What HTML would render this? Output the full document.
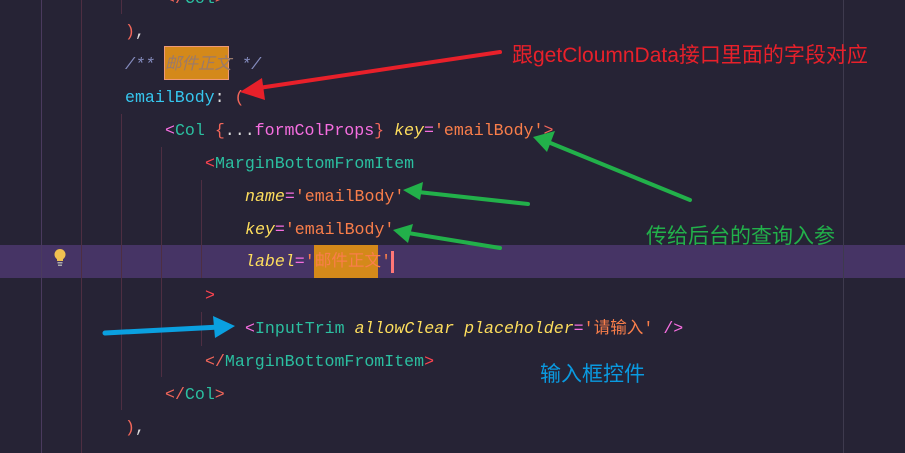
<!DOCTYPE html>
<html><head><meta charset="utf-8"><style>
body{margin:0;width:905px;height:453px;overflow:hidden;background:#262335;position:relative;font-family:"Liberation Mono","Noto Sans CJK SC",monospace;font-size:16.6px}
.l{position:absolute;left:0;height:33px;line-height:33px;white-space:pre}
.g{position:absolute;width:1px}
.p{color:#fe4450}.t{color:#2bbfa0}.a{color:#fede5d;font-style:italic}.s{color:#f97e4a}.c{color:#848bbd;font-style:italic}.v{color:#36c6ee}.w{color:#ddd}.m{color:#f66ee0}.o{color:#f2665a}
.ann{position:absolute;font-family:"Liberation Sans","Noto Sans CJK SC",sans-serif;font-size:21px;white-space:nowrap}
</style></head><body>
<div style="position:absolute;left:0;top:245px;width:905px;height:33px;background:#463465"></div>
<div class="g" style="left:41px;top:0;height:453px;background:#4a3a5e"></div>
<div class="g" style="left:81px;top:0;height:453px;background:#4e2e42"></div>
<div class="g" style="left:121px;top:0;height:14px;background:#4e2e42"></div>
<div class="g" style="left:121px;top:114px;height:296px;background:#4e2e42"></div>
<div class="g" style="left:161px;top:147px;height:230px;background:#4e2e42"></div>
<div class="g" style="left:201px;top:180px;height:98px;background:#4e2e42"></div>
<div class="g" style="left:201px;top:312px;height:34px;background:#4e2e42"></div>
<div class="g" style="left:843px;top:0;height:453px;background:#3e3a4e"></div>
<div class="l" style="top:-18px;left:165px"><span class="o">&lt;/</span><span class="t">Col</span><span class="o">&gt;</span></div>
<div class="l" style="top:15px;left:125px"><span class="o">)</span><span class="w">,</span></div>
<div style="position:absolute;left:165px;top:47px;width:63px;height:32px;background:#d4891a;outline:1px solid #e97"></div>
<div class="l" style="top:48px;left:125px"><span class="c">/** <span style="color:#9a7a6a">邮件正文</span> */</span></div>
<div class="l" style="top:81px;left:125px"><span class="v">emailBody</span><span class="w">: </span><span class="o">(</span></div>
<div class="l" style="top:114px;left:165px"><span class="m">&lt;</span><span class="t">Col</span> <span class="o">{</span><span class="w">...</span><span class="m">formColProps</span><span class="o">}</span> <span class="a">key</span><span class="m">=</span><span class="s">'emailBody'</span><span class="o">&gt;</span></div>
<div class="l" style="top:147px;left:205px"><span class="p">&lt;</span><span class="t">MarginBottomFromItem</span></div>
<div class="l" style="top:180px;left:245px"><span class="a">name</span><span class="m">=</span><span class="s">'emailBody'</span></div>
<div class="l" style="top:213px;left:245px"><span class="a">key</span><span class="m">=</span><span class="s">'emailBody'</span></div>
<div style="position:absolute;left:314px;top:245px;width:64px;height:33px;background:#d4891a"></div>
<div class="l" style="top:245px;left:245px"><span class="a">label</span><span class="m">=</span><span class="s">'邮件正文'</span><span style="display:inline-block;width:3px;height:22px;background:#f77;vertical-align:middle"></span></div>
<div class="l" style="top:279px;left:205px"><span class="p">&gt;</span></div>
<div class="l" style="top:312px;left:245px"><span class="m">&lt;</span><span class="t">InputTrim</span> <span class="a">allowClear</span> <span class="a">placeholder</span><span class="m">=</span><span class="s">'请输入'</span> <span class="m">/&gt;</span></div>
<div class="l" style="top:345px;left:205px"><span class="o">&lt;/</span><span class="t">MarginBottomFromItem</span><span class="p">&gt;</span></div>
<div class="l" style="top:378px;left:165px"><span class="o">&lt;/</span><span class="t">Col</span><span class="o">&gt;</span></div>
<div class="l" style="top:411px;left:125px"><span class="o">)</span><span class="w">,</span></div>
<svg style="position:absolute;left:52px;top:248px" width="16" height="20" viewBox="0 0 16 20"><circle cx="8" cy="6.5" r="5.5" fill="#f0c050"/><rect x="5" y="10" width="6" height="3" fill="#f0c050"/><rect x="5.5" y="14" width="5" height="1.5" fill="#aaa"/><rect x="6" y="16.5" width="4" height="1.5" fill="#aaa"/></svg>
<svg style="position:absolute;left:0;top:0" width="905" height="453">
<g stroke-linecap="round" fill="none">
<line x1="500" y1="52" x2="252" y2="89" stroke="#e8202a" stroke-width="4"/>
<line x1="690" y1="200" x2="548" y2="142" stroke="#22b04a" stroke-width="4"/>
<line x1="528" y1="204" x2="418" y2="192" stroke="#22b04a" stroke-width="4"/>
<line x1="500" y1="248" x2="408" y2="233" stroke="#22b04a" stroke-width="4"/>
<line x1="105" y1="333" x2="220" y2="327" stroke="#0aa0e0" stroke-width="5"/>
</g>
<polygon points="240,92 262,78 265,100" fill="#e8202a"/>
<polygon points="533,137 555,131 547,152" fill="#22b04a"/>
<polygon points="403,190 423,182 420,200" fill="#22b04a"/>
<polygon points="393,230 413,224 408,243" fill="#22b04a"/>
<polygon points="235,326 213,316 215,338" fill="#0aa0e0"/>
</svg>
<div class="ann" style="left:512px;top:39px;color:#e8202a">跟getCloumnData接口里面的字段对应</div>
<div class="ann" style="left:646px;top:220px;color:#22b04a">传给后台的查询入参</div>
<div class="ann" style="left:540px;top:358px;color:#0a9ae0">输入框控件</div>
</body></html>
